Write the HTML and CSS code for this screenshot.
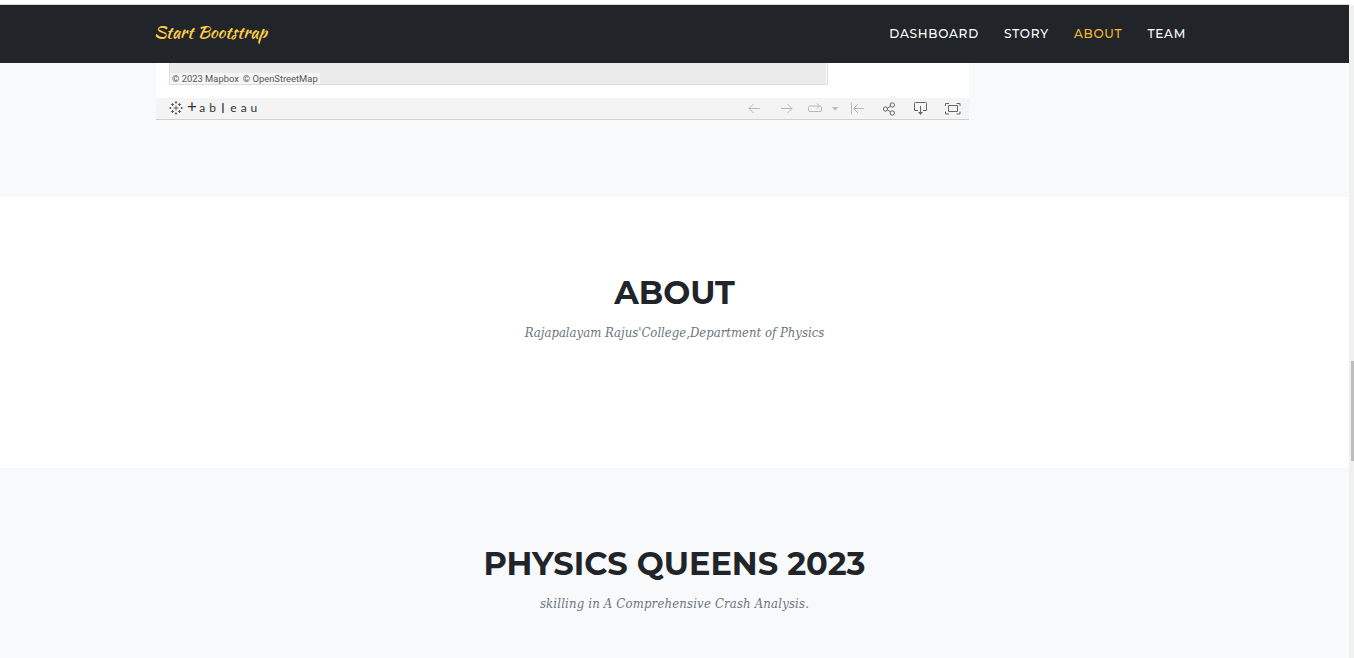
FILE: index.html
```html
<!DOCTYPE html>
<html lang="en">
<head>
<meta charset="utf-8">
<title>Start Bootstrap</title>
<link rel="stylesheet" href="styles.css">
</head>
<body>
<div class="page">
  <header class="navbar">
    <a class="brand">Start Bootstrap</a>
    <nav class="nav">
      <a class="nav-dashboard">DASHBOARD</a>
      <a class="nav-story">STORY</a>
      <a class="nav-about active">ABOUT</a>
      <a class="nav-team">TEAM</a>
    </nav>
  </header>
  <section class="story">
    <div class="viz">
      <div class="map"><span class="credits"><span>© 2023 Mapbox</span><span>© OpenStreetMap</span></span></div>
      <div class="toolbar">
        <svg class="mark" width="14" height="14" viewBox="0 0 14 14"><path d="M7 4.500v5M4.500 7h5M7 .3v2.400M5.800 1.500h2.400M7 11.300v2.400M5.800 12.500h2.400M.3 7h2M1.300 6v2M11.700 7h2M12.700 6v2M3.500 2v3M2 3.500h3M10.500 2v3M9 3.500h3M3.500 9v3M2 10.500h3M10.500 9v3M9 10.500h3"/></svg>
        <span class="wordmark"><i class="plus">+</i><i>a</i><i>b</i><i class="ell">l</i><i>e</i><i>a</i><i>u</i></span>
        <svg class="tools" width="214" height="20" viewBox="748 98 214 20">
          <g class="off"><path d="M760 108.500h-11M753.500 104l-4.500 4.500 4.500 4.500M781 108.500h11M787.500 104l4.500 4.500-4.500 4.500M812.500 111.500h-2.500q-1.500 0-1.500-1.500v-2.500q0-1.500 1.500-1.500h9M817 103.500l2.500 2.500-2.500 2.500M820 106q1.500.3 1.500 2v2q0 1.500-1.500 1.500h-8M851.500 102.500v12M864 108.500h-10M858 104l-4.500 4.500 4.500 4.500"/><path class="caret" d="M832 107h6.400l-3.200 3.500z"/></g>
          <g class="on"><circle cx="885.500" cy="109" r="2.100"/><circle cx="892.300" cy="105" r="2.200"/><circle cx="892.300" cy="113" r="2.200"/><path d="M887.500 108l3-1.700M887.500 110l3 1.700M918 110.500h-3.500v-7q0-1 1-1h10q1 0 1 1v7H923M920.500 106v8"/><path class="tip" d="M918 112h5l-2.500 3z"/><path d="M948.500 105.500h9v6h-9zM945.500 106v-2.500h3.500M956.500 103.500h3.500v2.500M945.500 111.500v2.500h3.500M956.500 114h3.500v-2.500"/></g>
        </svg>
      </div>
    </div>
  </section>
  <section class="panel about">
    <h2>ABOUT</h2>
    <h3>Rajapalayam Rajus'College,Department of Physics</h3>
  </section>
  <section class="panel team">
    <h2>PHYSICS QUEENS 2023</h2>
    <h3>skilling in A Comprehensive Crash Analysis.</h3>
  </section>
  <div class="scrollbar"><div class="thumb"></div></div>
</div>
</body>
</html>
```
FILE: styles.css
```css
* { box-sizing: border-box; }
body { margin: 0; background: #fff; overflow: hidden; }
.page { position: relative; width: 1354px; height: 658px; padding: 4px 5px 0 0; overflow: hidden; }
.navbar { display: flex; height: 59px; padding: 0 163px 0 154px; align-items: center; justify-content: space-between; background: #212529; border-top: 1px solid #d5d7d7; }
.brand { font: 400 17.400px/28px "Kaushan Script", Lato, sans-serif; color: #ffcd4a; white-space: nowrap; padding-bottom: 5px; }
.nav { display: flex; gap: 25.100px; padding-bottom: 1px; font: 500 12.100px/20px Montserrat, Inter, sans-serif; color: #fff; letter-spacing: .75px; }
.nav a { white-space: nowrap; }
.nav .active { color: #f0bb31; }
.story { height: 134px; padding-left: 156px; background: #f8f9fb; }
.viz { width: 813px; height: 57px; background: #fff; }
.map { display: flex; align-items: flex-end; width: 659px; height: 22px; margin-left: 13px; background: #ebebeb; border: solid #ddd; border-width: 0 1px 1px; box-shadow: inset -1px 0 #f8f8f8; }
.credits { display: flex; gap: 4px; height: 11px; padding: 0 2px; background: #f5f5f5; font: 9.400px/11px Roboto, sans-serif; color: #555; white-space: nowrap; }
.toolbar { display: flex; align-items: center; height: 22px; margin-top: 13px; padding: 0 7px 1px 13px; background: #f4f4f4; border-bottom: 1px solid #cfd0d2; }
.mark { fill: none; stroke: #555; stroke-width: .9; }
.wordmark { display: flex; width: 72px; margin-left: 4px; justify-content: space-between; font: 400 12px/16px Lato, sans-serif; color: #333; }
.wordmark i { width: 10px; text-align: center; font-style: normal; }
.wordmark .plus { font-size: 17px; line-height: 14px; }
.wordmark .ell { font-size: 14px; }
.tools { margin-left: auto; fill: none; }
.off { stroke: #b9b9b9; stroke-width: 1; }
.off .caret { fill: #b9b9b9; stroke: none; }
.on { stroke: #666; stroke-width: 1; }
.on .tip { fill: #666; stroke: none; }
.panel { height: 271px; padding-top: 76px; text-align: center; color: #212529; }
.team { background: #f8f9fb; }
h2 { margin: 0; font: 700 32px/40px Montserrat, Inter, sans-serif; white-space: nowrap; }
h3 { margin: 10px 0 0; font: italic 400 13px/20px "Roboto Slab", "DejaVu Serif Condensed", "DejaVu Serif", serif; color: #6c757d; white-space: nowrap; }
.team h3 { letter-spacing: .18px; }
.scrollbar { position: absolute; right: 0; top: 5px; bottom: 0; width: 5px; padding: 356px 0 0 2px; background: #f0f0f0; }
.thumb { height: 100px; background: #bdbdbd; }
```
